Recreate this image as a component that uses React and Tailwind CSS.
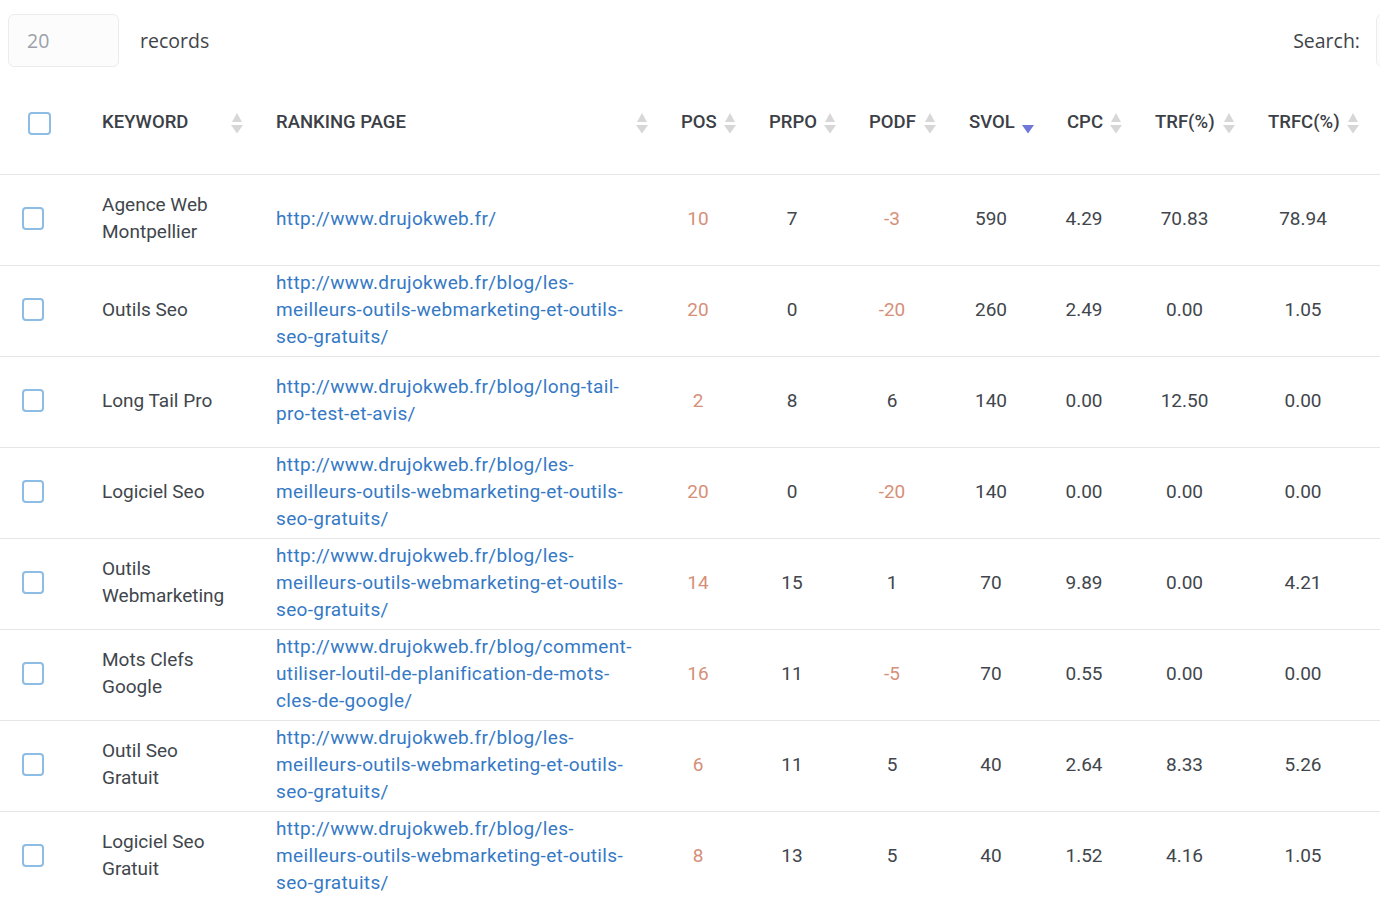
import React from "react";

const rows = [
  { kw: "Agence Web Montpellier", url: ["http://www.drujokweb.fr/"], pos: "10", prpo: "7", podf: "-3", svol: "590", cpc: "4.29", trf: "70.83", trfc: "78.94" },
  { kw: "Outils Seo", url: ["http://www.drujokweb.fr/blog/les-", "meilleurs-outils-webmarketing-et-outils-", "seo-gratuits/"], pos: "20", prpo: "0", podf: "-20", svol: "260", cpc: "2.49", trf: "0.00", trfc: "1.05" },
  { kw: "Long Tail Pro", url: ["http://www.drujokweb.fr/blog/long-tail-", "pro-test-et-avis/"], pos: "2", prpo: "8", podf: "6", svol: "140", cpc: "0.00", trf: "12.50", trfc: "0.00" },
  { kw: "Logiciel Seo", url: ["http://www.drujokweb.fr/blog/les-", "meilleurs-outils-webmarketing-et-outils-", "seo-gratuits/"], pos: "20", prpo: "0", podf: "-20", svol: "140", cpc: "0.00", trf: "0.00", trfc: "0.00" },
  { kw: "Outils Webmarketing", url: ["http://www.drujokweb.fr/blog/les-", "meilleurs-outils-webmarketing-et-outils-", "seo-gratuits/"], pos: "14", prpo: "15", podf: "1", svol: "70", cpc: "9.89", trf: "0.00", trfc: "4.21" },
  { kw: "Mots Clefs Google", url: ["http://www.drujokweb.fr/blog/comment-", "utiliser-loutil-de-planification-de-mots-", "cles-de-google/"], pos: "16", prpo: "11", podf: "-5", svol: "70", cpc: "0.55", trf: "0.00", trfc: "0.00" },
  { kw: "Outil Seo Gratuit", url: ["http://www.drujokweb.fr/blog/les-", "meilleurs-outils-webmarketing-et-outils-", "seo-gratuits/"], pos: "6", prpo: "11", podf: "5", svol: "40", cpc: "2.64", trf: "8.33", trfc: "5.26" },
  { kw: "Logiciel Seo Gratuit", url: ["http://www.drujokweb.fr/blog/les-", "meilleurs-outils-webmarketing-et-outils-", "seo-gratuits/"], pos: "8", prpo: "13", podf: "5", svol: "40", cpc: "1.52", trf: "4.16", trfc: "1.05" },
];

const GRID = "grid grid-cols-[78px_174px_405px_88px_100px_100px_98px_88px_113px_124px]";

function SortIcon({ active }) {
  return (
    <svg width="12" height="23" viewBox="0 0 12 23" className="shrink-0">
      {!active && <polygon points="1,10 6,1 11,10" fill="#d7d7d7" />}
      <polygon points="0,13 12,13 6,21.5" fill={active ? "#6f78d9" : "#d7d7d7"} />
    </svg>
  );
}

function Checkbox({ className }) {
  return <div className={"rounded-[4px] border-2 border-[#8dbce4] bg-white " + className} />;
}

function Th({ label, active }) {
  return (
    <div className="flex items-center justify-between pl-[24px] pr-[9px]">
      <span className="text-[18.5px] font-medium text-[#3b4046] whitespace-nowrap">{label}</span>
      <SortIcon active={active} />
    </div>
  );
}

function Num({ v, orange }) {
  return (
    <div className={"flex items-center justify-center pl-[24px] pr-[30px] " + (orange ? "text-[#d68f79]" : "text-[#41464c]")}>
      {v}
    </div>
  );
}

export default function App() {
  return (
    <div className="w-[1380px] h-[898px] overflow-hidden bg-white [font-family:Roboto,sans-serif]">
      <div className="w-[1580px] h-[72px] flex items-start pt-[14px] justify-between [font-family:'Open_Sans',sans-serif] text-[19.5px]">
        <div className="flex items-center h-[53px]">
          <div className="ml-[8px] w-[111px] h-[53px] rounded-[6px] border border-[#ececec] bg-[#fcfcfc] flex items-center pl-[18px] text-[#9ba1a9]">
            20
          </div>
          <span className="ml-[21px] text-[#3f444a]">records</span>
        </div>
        <div className="flex items-center h-[53px]">
          <span className="text-[#3f444a]">Search:</span>
          <div className="ml-[16px] w-[204px] h-[53px] rounded-[6px] border border-[#ececec] bg-[#fcfcfc]" />
        </div>
      </div>

      <div className={GRID + " h-[103px] border-b border-[#e6e6e6]"}>
        <div className="flex items-center pl-[28px]">
          <Checkbox className="w-[23px] h-[23px]" />
        </div>
        <Th label="KEYWORD" />
        <Th label="RANKING PAGE" />
        <Th label="POS" />
        <Th label="PRPO" />
        <Th label="PODF" />
        <Th label="SVOL" active />
        <Th label="CPC" />
        <Th label="TRF(%)" />
        <Th label="TRFC(%)" />
      </div>

      {rows.map((r, i) => (
        <div key={i} className={GRID + " h-[91px] pb-[4px] border-b border-[#e6e6e6] text-[19px] leading-[27px] text-[#41464c]"}>
          <div className="flex items-center pl-[22px]">
            <Checkbox className="w-[22px] h-[23px]" />
          </div>
          <div className="flex items-center pl-[24px] pr-[30px]">
            <span>{r.kw}</span>
          </div>
          <div className="flex items-center pl-[24px] pr-[10px]">
            <a href="#" className="text-[#3579c5] whitespace-nowrap tracking-[0.35px]">
              {r.url.map((l, j) => (
                <span key={j} className="block">{l}</span>
              ))}
            </a>
          </div>
          <Num v={r.pos} orange />
          <Num v={r.prpo} />
          <Num v={r.podf} orange={r.podf.startsWith("-")} />
          <Num v={r.svol} />
          <Num v={r.cpc} />
          <Num v={r.trf} />
          <Num v={r.trfc} />
        </div>
      ))}
    </div>
  );
}
